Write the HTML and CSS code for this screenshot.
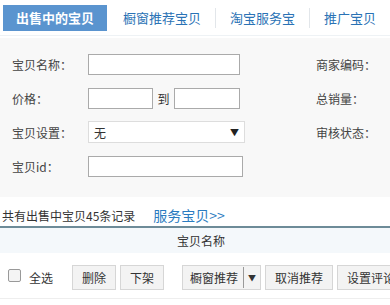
FILE: index.html
```html
<!DOCTYPE html>
<html>
  <head>
    <title>出售中的宝贝</title>
    <meta name="viewport" content="width=device-width, initial-scale=1" />
    <link rel="stylesheet" href="styles.css">
  </head>
  <body>
    <div class="tabs">
      <a class="tab active">出售中的宝贝</a>
      <a class="tab">橱窗推荐宝贝</a>
      <a class="tab">淘宝服务宝</a>
      <a class="tab">推广宝贝</a>
    </div>

    <form class="search">
      <div class="row">
        <label class="lbl">宝贝名称：</label>
        <input class="txt long" type="text" />
        <span class="side">商家编码：</span>
      </div>
      <div class="row">
        <label class="lbl">价格：</label>
        <input class="txt short" type="text" />
        <span class="to">到</span>
        <input class="txt short2" type="text" />
        <span class="side">总销量：</span>
      </div>
      <div class="row">
        <label class="lbl">宝贝设置：</label>
        <div class="select">无<span class="arrow">▼</span></div>
        <span class="side">审核状态：</span>
      </div>
      <div class="row">
        <label class="lbl">宝贝id：</label>
        <input class="txt long2" type="text" />
      </div>
    </form>

    <div class="summary">
      <span>共有出售中宝贝45条记录</span>
      <a class="more">服务宝贝&gt;&gt;</a>
    </div>

    <div class="thead">宝贝名称</div>

    <div class="toolbar">
      <label class="check"><span class="box"></span>全选</label>
      <button class="btn">删除</button>
      <button class="btn">下架</button>
      <span class="sep"></span>
      <button class="btn split">橱窗推荐<span class="caret">▼</span></button>
      <button class="btn">取消推荐</button>
      <button class="btn">设置评论</button>
    </div>
  </body>
</html>
```

FILE: styles.css
```css
body {
  margin: 0;
  font-family: "Noto Sans CJK SC", "Liberation Sans", sans-serif;
  font-size: 12px;
  color: #333;
  background: #fff;
  width: 390px;
  overflow: hidden;
}

.tabs {
  display: flex;
  align-items: center;
  height: 35px;
  padding-left: 3px;
  border-bottom: 1px solid #eef2f5;
}

.tab {
  font-size: 13px;
  color: #2a72b5;
  padding: 0 14px;
  border-left: 1px solid #e2e6ea;
  line-height: 20px;
}

.tab:nth-child(2) {
  border-left: none;
}

.tab.active {
  background: #5a94cf;
  color: #fff;
  font-weight: bold;
  line-height: 26px;
  padding: 0 13px;
  border: none;
  margin-right: 2px;
}

.search {
  background: #f8f8f8;
  margin: 2px 0 0;
  padding: 9px 0 14px 12px;
}

.row {
  display: flex;
  align-items: center;
  height: 34px;
}

.lbl {
  width: 76px;
  color: #444;
}

.txt {
  height: 19px;
  border: 1px solid #aaa;
  padding: 0;
  background: #fff;
  box-sizing: content-box;
}

.long { width: 150px; }
.short { width: 63px; }
.short2 { width: 64px; }
.long2 { width: 153px; }

.to {
  width: 21px;
  text-align: center;
}

.side {
  margin-left: auto;
  width: 74px;
  color: #444;
}

.select {
  width: 145px;
  height: 20px;
  border: 1px solid #ddd;
  background: #fff;
  display: flex;
  align-items: center;
  padding: 0 5px;
  font-size: 12px;
}

.arrow {
  margin-left: auto;
  font-size: 9px;
  color: #222;
}

.summary {
  display: flex;
  align-items: baseline;
  padding: 8px 0 4px 2px;
  border-bottom: 2px solid #6d8b98;
  height: 17px;
}

.more {
  margin-left: 18px;
  font-size: 14px;
  color: #2a7bc0;
}

.thead {
  background: #f4f8fb;
  text-align: center;
  height: 25px;
  line-height: 25px;
  padding-left: 12px;
  color: #333;
}

.toolbar {
  display: flex;
  align-items: center;
  padding: 12px 0 8px 8px;
  border-bottom: 1px solid #eee;
  white-space: nowrap;
  overflow: hidden;
}

.check {
  display: flex;
  align-items: center;
  margin-right: 19px;
}

.box {
  width: 11px;
  height: 11px;
  border: 1px solid #999;
  border-radius: 2px;
  background: #f4f4f4;
  margin-right: 8px;
  margin-top: -4px;
}

.btn {
  font-family: inherit;
  font-size: 12px;
  color: #333;
  background: #f3f3f3;
  border: 1px solid #d6d6d6;
  height: 25px;
  padding: 0 9px;
  margin-right: 4px;
  flex-shrink: 0;
}

.sep {
  width: 1px;
  height: 20px;
  background: #ddd;
  margin: 0 8px 0 6px;
}

.split {
  display: flex;
  align-items: center;
  padding: 0 0 0 7px;
}

.caret {
  border-left: 1px solid #999;
  height: 21px;
  line-height: 21px;
  margin-left: 5px;
  padding: 0 4px;
  font-size: 8px;
}
```
